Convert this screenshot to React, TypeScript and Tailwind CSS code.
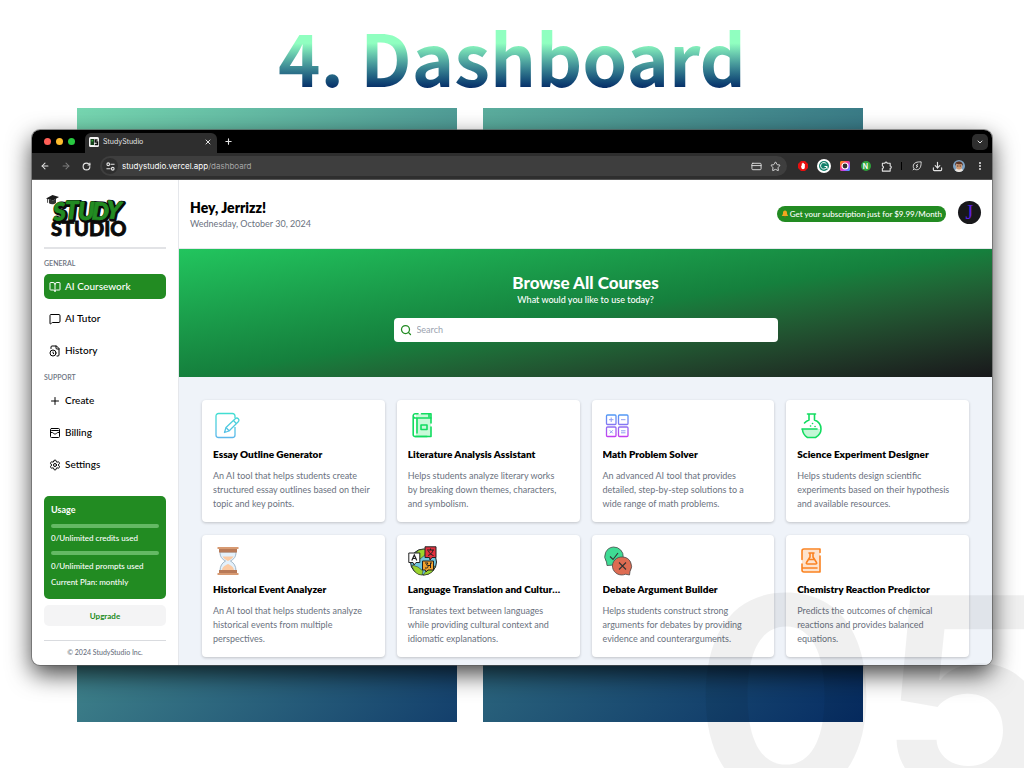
import React from "react";
import {
  ArrowLeft,
  ArrowRight,
  BookOpen,
  ChevronDown,
  CreditCard,
  Download,
  EllipsisVertical,
  MessageSquare,
  Plus,
  RotateCw,
  Search,
  Settings,
  Star,
  WalletCards,
  X,
} from "lucide-react";

function FileClockIcon() {
  return (
    <svg viewBox="0 0 24 24" className="size-3" fill="none" stroke="currentColor" strokeWidth="2" strokeLinecap="round" strokeLinejoin="round" aria-hidden="true">
      <path d="M16 22h2a2 2 0 0 0 2-2V7l-5-5H6a2 2 0 0 0-2 2v3" />
      <path d="M14 2v4a2 2 0 0 0 2 2h4" />
      <circle cx="8" cy="16" r="6" />
      <path d="M9.5 17.5 8 16.25V14" />
    </svg>
  );
}

function Logo() {
  return (
    <svg viewBox="0 0 84 44" className="ml-px h-11 w-[84px]" role="img" aria-label="Study Studio">
      <g fontFamily="Lato, sans-serif" fontWeight="900">
        <text x="6" y="42" fontSize="20" fill="#0a0a0a" stroke="#0a0a0a" strokeWidth="0.8">STUDIO</text>
        <g fontSize="24" fontStyle="italic" strokeLinejoin="round">
          <g fill="#0a0a0a" stroke="#0a0a0a" strokeWidth="4">
            <text x="9" y="27" transform="rotate(-6 16 18)">S</text>
            <text x="21" y="26">T</text>
            <text x="34" y="27">U</text>
            <text x="48" y="27" transform="rotate(3 58 18)">D</text>
            <text x="62" y="26" transform="rotate(5 72 18)">Y</text>
          </g>
          <g fill="#228b22" stroke="#228b22" strokeWidth="0.800">
            <text x="8" y="26" transform="rotate(-6 16 18)">S</text>
            <text x="20" y="25">T</text>
            <text x="33" y="26">U</text>
            <text x="47" y="26" transform="rotate(3 58 18)">D</text>
            <text x="61" y="25" transform="rotate(5 72 18)">Y</text>
          </g>
        </g>
      </g>
      <path d="M1 4.500 7.500 1 14 3 8 6.500z" fill="#1a1a1a" />
      <path d="M4 5v4.200c2 1.600 5 1.600 7-.4V4.600L8 6.500z" fill="#333" />
      <path d="M2.600 4.800v4" stroke="#1a1a1a" strokeWidth=".8" />
    </svg>
  );
}

function TrafficLights() {
  return (
    <div className="flex gap-[5px]" aria-hidden="true">
      <span className="size-[7px] rounded-full bg-[#ff5f57]" />
      <span className="size-[7px] rounded-full bg-[#febc2e]" />
      <span className="size-[7px] rounded-full bg-[#28c840]" />
    </div>
  );
}

function BrowserChrome() {
  const tool = "flex size-[21px] items-center justify-center";
  return (
    <div className="font-['Inter',sans-serif] text-[#e3e3e3]">
      <div className="flex h-[23px] items-center bg-black pl-3">
        <TrafficLights />
        <div className="mt-[3px] ml-[10px] flex h-5 w-[132px] items-center rounded-t-md bg-[#2e2e2e] px-1">
          <svg viewBox="0 0 20 20" className="mb-[3px] size-[10px]" aria-hidden="true">
            <rect width="20" height="20" rx="3" fill="#f4f4f4" />
            <path d="M3 4h7v12H3z" fill="#14401a" />
            <path d="M5 6h3v3H5z" fill="#35a53a" />
            <path d="M17 6h-4.500v4H17v5h-5.500" fill="none" stroke="#111" strokeWidth="3" />
          </svg>
          <span className="mb-[3px] ml-1 flex-1 text-[7px] leading-[10px]">StudyStudio</span>
          <button aria-label="Close tab" className="mb-[3px] mr-px"><X className="size-2" strokeWidth={3} /></button>
        </div>
        <button aria-label="New tab" className="ml-[7px]"><Plus className="size-[9px]" strokeWidth={3} /></button>
        <button aria-label="Search tabs" className="ml-auto mr-1 flex size-4 items-center justify-center rounded-[5px] bg-[#2e2e2e]">
          <ChevronDown className="size-2" strokeWidth={3} />
        </button>
      </div>
      <div className="flex h-[27px] items-center border-b border-[#555] bg-[#2e2e2e] pl-[2px] pr-[2px]">
        <button aria-label="Back" className={tool}><ArrowLeft className="size-[10px]" strokeWidth={2.5} /></button>
        <button aria-label="Forward" className={tool + " text-[#7d7d7d]"}><ArrowRight className="size-[10px]" strokeWidth={2.5} /></button>
        <button aria-label="Reload" className={tool}><RotateCw className="size-[9px]" strokeWidth={3} /></button>
        <div className="ml-[3px] mr-[5px] flex h-5 flex-1 items-center rounded-full bg-[#3e3e3e] px-[2px]">
          <span className="flex size-4 items-center justify-center rounded-full bg-[#2e2e2e]">
            <svg viewBox="0 0 20 20" className="size-[9px]" fill="none" stroke="currentColor" strokeWidth="2.400" aria-hidden="true">
              <circle cx="5" cy="5" r="3" />
              <path d="M10 5h9M1 15h9" />
              <circle cx="15" cy="15" r="3" />
            </svg>
          </span>
          <span className="ml-1 flex-1 text-[8px] leading-3 text-white">studystudio.vercel.app<span className="text-[#a5a5a5]">/dashboard</span></span>
          <CreditCard className="mr-2 size-[11px]" />
          <Star className="mr-1 size-[11px]" />
        </div>
        <span className={tool}>
          <svg viewBox="0 0 20 20" className="size-[10px]" aria-hidden="true">
            <path d="M6 0h8l6 6v8l-6 6H6l-6-6V6z" fill="#e60f0f" />
            <path d="M6 9l1.500 1V5h1.500v4V3.500h1.600V9V4.500h1.500V10V6h1.600v6c0 3-1.500 4.500-3.700 4.500-2.500 0-3.500-2-4-7.500z" fill="#fff" />
          </svg>
        </span>
        <span className={tool}>
          <svg viewBox="0 0 28 28" className="size-[14px]" aria-hidden="true">
            <circle cx="14" cy="14" r="14" fill="#fff" />
            <circle cx="14" cy="14" r="10" fill="#11806a" />
            <path d="M19 10a6.500 6.500 0 1 0 1 5h-5M20 15v5" fill="none" stroke="#fff" strokeWidth="2" />
          </svg>
        </span>
        <span className={tool}>
          <svg viewBox="0 0 20 20" className="size-[10px]" aria-hidden="true">
            <defs>
              <linearGradient id="cam" x1="0" y1="0" x2="1" y2="1">
                <stop offset="0" stopColor="#ffb000" /><stop offset=".35" stopColor="#ff3d6a" /><stop offset=".7" stopColor="#b14bff" /><stop offset="1" stopColor="#21b7ff" />
              </linearGradient>
            </defs>
            <rect width="20" height="20" rx="3" fill="url(#cam)" />
            <circle cx="10" cy="10" r="6" fill="#2e2e2e" stroke="#fff" strokeWidth="2.400" />
          </svg>
        </span>
        <span className={tool}>
          <span className="flex size-[10px] items-center justify-center rounded-full bg-[#2fa53c] text-[7px] leading-none font-semibold text-white">N</span>
        </span>
        <span className={tool}>
          <svg viewBox="0 0 24 24" className="size-[11px]" fill="none" stroke="currentColor" strokeWidth="2.400" strokeLinejoin="round" aria-hidden="true">
            <path d="M3 5h5.500a2.500 2.500 0 0 1 5 0H20v6a2.500 2.500 0 0 1 0 5v6H3v-6a2.500 2.500 0 0 0 0-5z" />
          </svg>
        </span>
        <span className="mx-1 h-2 w-px bg-black" />
        <span className={tool}>
          <svg viewBox="0 0 24 24" className="size-[10px]" fill="none" stroke="currentColor" strokeWidth="2.200" strokeLinejoin="round" aria-hidden="true">
            <path d="M22 2c-9 0-19 1-19 11 0 5 3 8 8 8 9 0 11-9 11-19zM5 19l-3 3" />
            <path d="M14 7l-4 5h4l-4 5" />
          </svg>
        </span>
        <span className={tool}><Download className="size-[11px]" strokeWidth={2.5} /></span>
        <span className={tool}>
          <svg viewBox="0 0 24 24" className="size-3" aria-hidden="true">
            <circle cx="12" cy="12" r="12" fill="#7fa3c4" />
            <path d="M4 21c1-4 4-5 8-5s7 1 8 5a12 12 0 0 1-16 0z" fill="#e8e2dc" />
            <ellipse cx="12" cy="12" rx="6" ry="7" fill="#d39a72" />
            <path d="M4 12c0-8 4-9 8-9s8 2 8 9l-3-4c-3 1-7 1-10-1z" fill="#5a3424" />
            <path d="M8 12h3M13 12h3" stroke="#222" strokeWidth="1.500" />
          </svg>
        </span>
        <button aria-label="Browser menu" className={tool}><EllipsisVertical className="size-[10px]" strokeWidth={3} /></button>
      </div>
    </div>
  );
}

function NavItem({ icon, label, active = false }: { icon: React.ReactNode; label: string; active?: boolean }) {
  return (
    <a
      href="#"
      aria-current={active ? "page" : undefined}
      className={
        active
          ? "flex h-[25px] items-center gap-1 rounded-[5px] bg-[#228b22] px-[5px] text-[10px] text-white"
          : "flex h-[25px] items-center gap-1 rounded-[5px] px-[5px] text-[10px] text-black"
      }
    >
      {icon}
      {label}
    </a>
  );
}

function Sidebar() {
  return (
    <aside className="flex w-[147px] shrink-0 flex-col border-r border-[#e5e7eb] px-3 pt-[14px] font-medium">
      <Logo />
      <hr className="mt-[9px] border-t-2 border-[#e2e3e6]" />
      <h2 className="mt-2 text-[7px] leading-3 font-semibold text-[#6b7280]">GENERAL</h2>
      <nav className="mt-[5px] flex flex-col gap-[7px]">
        <NavItem active label="AI Coursework" icon={<BookOpen className="size-3" />} />
        <NavItem label="AI Tutor" icon={<MessageSquare className="size-3" />} />
        <NavItem label="History" icon={<FileClockIcon />} />
      </nav>
      <h2 className="mt-2 text-[7px] leading-3 font-semibold text-[#6b7280]">SUPPORT</h2>
      <nav className="mt-[5px] flex flex-col gap-[7px]">
        <NavItem label="Create" icon={<Plus className="size-3" />} />
        <NavItem label="Billing" icon={<WalletCards className="size-3" />} />
        <NavItem label="Settings" icon={<Settings className="size-3" />} />
      </nav>
      <section className="mt-[19px] rounded-[5px] bg-[#228b22] px-[7px] pt-2 pb-[11px] text-[8px] leading-3 text-white">
        <h3 className="text-[9px] font-bold">Usage</h3>
        <div className="mt-2 h-1 rounded-full bg-[#64b964]" />
        <p className="mt-1">0/Unlimited credits used</p>
        <div className="mt-[7px] h-1 rounded-full bg-[#64b964]" />
        <p className="mt-[5px]">0/Unlimited prompts used</p>
        <p className="mt-1">Current Plan: monthly</p>
      </section>
      <button className="mt-[6px] h-[21px] rounded-[5px] bg-[#f4f4f5] text-[8px] font-bold text-[#228b22]">Upgrade</button>
      <hr className="mt-[14px] border-[#d9dbdf]" />
      <p className="mt-[5px] text-center text-[7px] leading-3 text-[#6b7280]">© 2024 StudyStudio Inc.</p>
    </aside>
  );
}

function PencilPageIcon() {
  return (
    <svg viewBox="0 0 28 28" className="size-7" fill="none" aria-hidden="true">
      <defs>
        <linearGradient id="page" x1="0" y1="0" x2="0" y2="28" gradientUnits="userSpaceOnUse">
          <stop stopColor="#3fe0d0" /><stop offset="1" stopColor="#5fb4ee" />
        </linearGradient>
      </defs>
      <g stroke="url(#page)" strokeWidth="1.300" strokeLinejoin="round">
        <path d="M22 6V4a2.500 2.500 0 0 0-2.500-2.500H5.500A2.500 2.500 0 0 0 3 4v19A2.500 2.500 0 0 0 5.500 25.500h14a2.500 2.500 0 0 0 2.500-2.500v-8" />
        <path d="M11.500 20.500l1.500-5L22.500 6.500c2-1.500 4.500 1 3 3L16 19z" />
        <path d="M13 15.500l3 3.300M20.500 8.500l3 3.200" />
      </g>
    </svg>
  );
}

function BookIcon() {
  return (
    <svg viewBox="0 0 28 28" className="size-7" fill="none" aria-hidden="true">
      <path d="M8 2h15v22H8z" fill="#c9f9d9" />
      <g stroke="#12dc60" strokeWidth="1.600" strokeLinecap="round" strokeLinejoin="round">
        <path d="M23 15v9.500H7A1.800 1.800 0 0 1 5.200 22.700V3.500A2 2 0 0 1 7 1.800h3M13.500 1.800H23V6H7C5.500 6 5.200 5 5.200 3.800" />
        <path d="M23 6v5M9 6.500V21M21 2v3M7 24.500h12" />
        <rect x="13" y="13" width="6" height="4.500" />
      </g>
    </svg>
  );
}

function MathIcon() {
  return (
    <svg viewBox="0 0 28 28" className="size-7" fill="none" aria-hidden="true">
      <defs>
        <linearGradient id="math" x1="0" y1="2" x2="0" y2="25" gradientUnits="userSpaceOnUse">
          <stop stopColor="#4d9bf5" /><stop offset=".5" stopColor="#8a74f2" /><stop offset="1" stopColor="#c43df0" />
        </linearGradient>
      </defs>
      <g stroke="url(#math)" strokeWidth="1.300">
        <rect x="3.500" y="3" width="9.500" height="9.500" rx="1" />
        <rect x="15.500" y="3" width="9.500" height="9.500" rx="1" />
        <rect x="3.500" y="15" width="9.500" height="9.500" rx="1" />
        <rect x="15.500" y="15" width="9.500" height="9.500" rx="1" />
      </g>
      <g stroke="#8f9df2" strokeWidth="1">
        <path d="M6 7.700h4.500M8.200 5.500V10M18 7.700h4.500M6.800 18.300l3 3M9.800 18.300l-3 3M18 18.800h4.500M18 20.800h4.500" />
      </g>
    </svg>
  );
}

function FlaskIcon() {
  return (
    <svg viewBox="0 0 28 28" className="size-7" fill="none" aria-hidden="true">
      <path d="M6 17h17c-.5 4-2.500 7-5 8h-7c-3-1.500-4.500-4-5-8z" fill="#c4f7d6" />
      <g stroke="#12dc60" strokeWidth="1.600" strokeLinecap="round" strokeLinejoin="round">
        <path d="M10.500 2h8M12 2v6c-2 .8-3.500 1.800-4.500 3M5.500 17.500c.3 4 2.500 6.500 5 8h8c3.500-2 5.500-5 5.500-8.500 0-4-2.500-7.500-6.500-9V2" />
        <path d="M5 17h15" />
        <path d="M13.500 14h.1M15.500 11.500h.1M18 14.500h.1" />
      </g>
    </svg>
  );
}

function HourglassIcon() {
  return (
    <svg viewBox="0 0 28 28" className="size-7" aria-hidden="true">
      <path d="M7 5h16c0 5-2 7-5.500 9C21 16 23 19 23 24H7c0-5 2-8 5.500-10C9 12 7 10 7 5z" fill="#e4f1fb" stroke="#8da5b8" strokeWidth=".8" />
      <path d="M9.500 9.500h11c-1 2-3 3-5.500 4.500-2.500-1.500-4.500-2.500-5.500-4.500zM15 17c3 1.500 6 3 6 6.500H9c0-3.500 3-5 6-6.500z" fill="#fbcaa3" />
      <path d="M4.500 0h21v2h-21zM4.500 26h21v2h-21z" fill="#d79a72" />
      <path d="M6 2h18v3.500H6zM6 23h18v3H6z" fill="#b87a58" />
    </svg>
  );
}

function GlobeTalkIcon() {
  return (
    <svg viewBox="0 0 30 30" className="size-[30px]" aria-hidden="true">
      <circle cx="15.500" cy="16" r="13" fill="#6fc5dc" stroke="#222" />
      <path d="M5 9l6-5 7-1-1 6-5 4-6 1zM4 19l6 2 5 4-1 4c-5 0-9-4-10-10zM15 29l4-5 8-4c-1 5-5 9-12 9z" fill="#9bd32e" stroke="#222" strokeWidth=".5" />
      <path d="M17 .8h11v10.700h-4L22 14l-.5-2.500H17z" fill="#e5313f" stroke="#222" />
      <path d="M.8 7h11v9.500H8L6 19l-1-2.500H.8z" fill="#fff" stroke="#222" />
      <path d="M14.500 15h11v9H20l-2 2-.5-2h-3z" fill="#f3a32e" stroke="#222" />
      <path d="M3.800 14.500 6.300 9l2.500 5.500M4.800 12.500h3" fill="none" stroke="#222" strokeWidth="1.200" />
      <path d="M19 4h7M22.500 2.500V4M20 9.500c3-1 4.500-3 5-5.500M20.500 5c1 2.500 3 4 5 4.500" fill="none" stroke="#222" />
      <path d="M17 17h3l-1.500 2c2 0 2 3 0 3H17M20 19.500h2.500M22.500 17v5M22 17h2" fill="none" stroke="#222" />
    </svg>
  );
}

function DebateIcon() {
  return (
    <svg viewBox="0 0 30 30" className="size-[30px]" aria-hidden="true">
      <g stroke="#4a4a4a" strokeWidth=".8" strokeLinejoin="round">
        <path d="M10.500 1a9.700 9.200 0 1 1-2 18.200L4 19.500 3.500 16A9.500 9.500 0 0 1 10.500 1z" fill="#3fdb94" />
        <path d="M19.500 11A9.300 9.300 0 0 1 27 25.500l-.5 3.500-4-.8A9.300 9 0 1 1 19.500 11z" fill="#de6c52" />
      </g>
      <path d="M7 10.500l3 3L15 7M16 16.500l7 7M23 16.500l-7 7" fill="none" stroke="#333" strokeWidth="1.100" />
    </svg>
  );
}

function ChemBookIcon() {
  return (
    <svg viewBox="0 0 28 28" className="size-7" fill="none" aria-hidden="true">
      <path d="M5 3h18v22H5z" fill="#fde3cd" />
      <g stroke="#fa8220" strokeWidth="1.600" strokeLinecap="round" strokeLinejoin="round">
        <path d="M5 12.500V4a2 2 0 0 1 2-2h16v3.500M23 9v16H7a2 2 0 0 1-2-2v-6M5.500 21H20" />
        <path d="M12 6h5M13 6v4l-3.500 5.500c-.5 1 0 1.500 1 1.500h8c1 0 1.500-.5 1-1.500L16 10V6M11.500 12.500h6" />
      </g>
    </svg>
  );
}

const courses = [
  { icon: <PencilPageIcon />, title: "Essay Outline Generator", text: "An AI tool that helps students create structured essay outlines based on their topic and key points." },
  { icon: <BookIcon />, title: "Literature Analysis Assistant", text: "Helps students analyze literary works by\u00a0breaking down themes, characters, and symbolism." },
  { icon: <MathIcon />, title: "Math Problem Solver", text: "An advanced AI tool that provides detailed, step-by-step solutions to a wide range of math problems." },
  { icon: <FlaskIcon />, title: "Science Experiment Designer", text: "Helps students design scientific experiments based on their hypothesis and available resources." },
  { icon: <HourglassIcon />, title: "Historical Event Analyzer", text: "An AI tool that helps students analyze historical events from multiple perspectives." },
  { icon: <GlobeTalkIcon />, title: "Language Translation and Cultural Context", text: "Translates text between languages while\u00a0providing cultural context and idiomatic explanations." },
  { icon: <DebateIcon />, title: "Debate Argument Builder", text: "Helps students construct strong arguments for debates by providing evidence and counterarguments." },
  { icon: <ChemBookIcon />, title: "Chemistry Reaction Predictor", text: "Predicts the outcomes of chemical reactions and provides balanced equations." },
];

function CourseCard({ icon, title, text }: { icon: React.ReactNode; title: string; text: string }) {
  return (
    <article className="min-w-0 rounded bg-white pt-3 pr-3 pb-[11px] pl-[11px] shadow-[0_1px_3px_rgba(0,0,0,0.2)]">
      <div className="flex h-7 items-center">{icon}</div>
      <h3 className="mt-[6px] truncate pr-[5px] text-[10px] leading-4 font-extrabold text-black">{title}</h3>
      <p className="mt-[7px] text-[9px] leading-[14px] text-[#6b7280]">{text}</p>
    </article>
  );
}

function Dashboard() {
  return (
    <main className="flex min-w-0 flex-1 flex-col">
      <header className="flex h-[69px] items-center justify-between border-b border-[#e5e7eb] px-[11px]">
        <div className="pt-px">
          <h2 className="text-[14px] leading-[18px] font-extrabold text-black">Hey, Jerrizz!</h2>
          <p className="text-[9px] leading-[14px] text-[#6b7280]">Wednesday, October 30, 2024</p>
        </div>
        <div className="flex items-center gap-3 pb-1">
          <a href="#" className="mt-[3px] flex h-4 items-center gap-px rounded-full bg-[#228b22] px-1 text-[8px] font-medium text-white">
            <svg viewBox="0 0 16 16" className="size-2" aria-hidden="true">
              <path d="M8 1c3 0 4 2 4 5 0 2.500 1 4 2.500 6h-13C3 10 4 8.500 4 6c0-3 1-5 4-5z" fill="#f2a51f" />
              <path d="M6 13h4l-2 2.500z" fill="#a85a16" />
            </svg>
            Get your subscription just for $9.99/Month
          </a>
          <button className="flex size-[23px] items-center justify-center rounded-full bg-[#18181b] font-['Liberation_Serif',serif] text-[20px] leading-none text-[#5b21e0]">J</button>
        </div>
      </header>
      <section className="flex h-32 flex-col items-center bg-linear-to-br from-[#22c55e] via-[#15803d] to-[#18181b] px-6 pt-6 text-white">
        <h1 className="text-[17px] leading-[20px] font-black">Browse All Courses</h1>
        <p className="text-[9px] leading-[14px] font-medium">What would you like to use today?</p>
        <label className="mt-[11px] flex h-6 w-full max-w-[384px] items-center gap-[5px] rounded bg-white px-[6px]">
          <Search className="size-3 text-[#228b22]" strokeWidth={2.5} />
          <input type="search" aria-label="Search" placeholder="Search" className="min-w-0 flex-1 bg-transparent text-[9px] text-black outline-none placeholder:text-[#9ca3af]" />
        </label>
      </section>
      <section className="grid flex-1 grid-cols-4 content-start gap-x-3 gap-y-[13px] bg-[#eff3f9] px-[23px] pt-[23px] pb-2">
        {courses.map((course) => (
          <CourseCard key={course.title} {...course} />
        ))}
      </section>
    </main>
  );
}

export default function App() {
  return (
    <div className="relative min-h-screen overflow-hidden bg-white font-['Lato',sans-serif]">
      <h1 className="bg-linear-to-b from-[#90ffc0] from-40% to-[#072a66] to-82% bg-clip-text pt-1 text-center font-['Noto_Sans_CJK_SC',sans-serif] text-[72px] leading-[104px] font-bold text-transparent">
        4. Dashboard
      </h1>
      <div className="relative px-8 pt-[22px] pb-[57px]">
        <div className="absolute inset-y-0 right-[161px] left-[77px] flex gap-[26px]">
          <span className="flex-1 bg-linear-[135deg] from-[#76d6b0] to-[#133f6c]" />
          <span className="flex-1 bg-linear-[135deg] from-[#5bad9d] to-[#062c63]" />
        </div>
        <div className="relative overflow-hidden rounded-lg bg-white shadow-[0_0_0_1px_rgba(90,90,90,0.6),0_9px_24px_rgba(0,0,0,0.75)]">
          <BrowserChrome />
          <div className="flex">
            <Sidebar />
            <Dashboard />
          </div>
        </div>
      </div>
      <div aria-hidden="true" className="pointer-events-none absolute top-[568px] left-[693px] font-['Inter',sans-serif] text-[276px] leading-[256px] font-bold text-black/6">
        05
      </div>
    </div>
  );
}
